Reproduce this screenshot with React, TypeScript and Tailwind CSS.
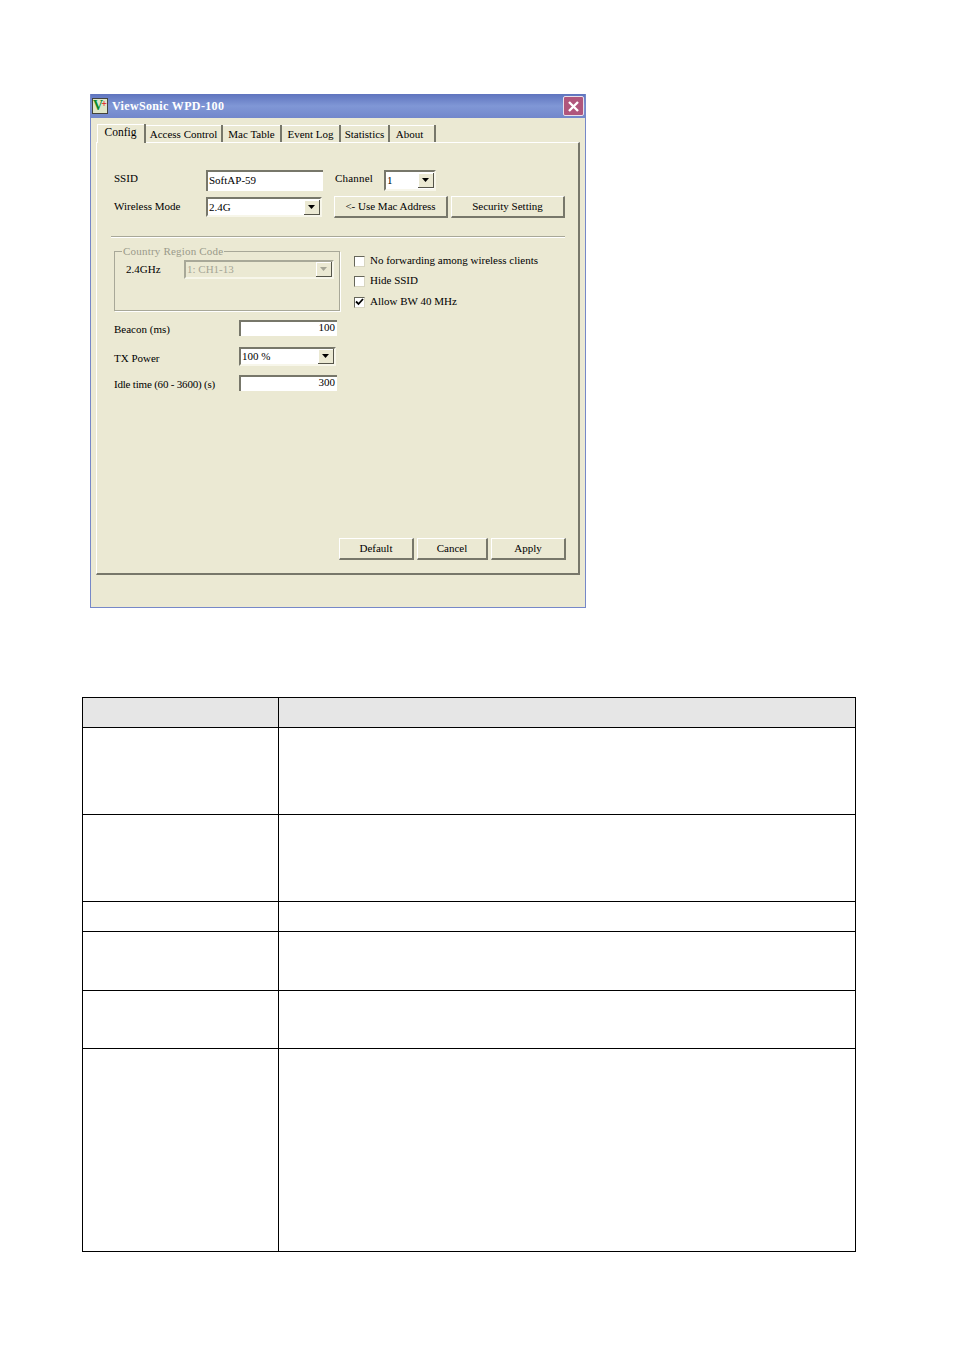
const serif = { fontFamily: '"Liberation Serif", "Noto Sans CJK TC", serif' };

function Arrow({ disabled }: { disabled?: boolean }) {
  return (
    <svg width="7" height="4" viewBox="0 0 7 4">
      <path d="M0 0H7L3.5 4Z" fill={disabled ? '#a5a596' : '#000000'} />
    </svg>
  );
}

function Combo({ value, className, disabled }: { value: string; className: string; disabled?: boolean }) {
  return (
    <div
      className={`flex items-center border-2 ${
        disabled
          ? 'border-t-[#a8a898] border-l-[#a8a898] border-r-[#f7f6ea] border-b-[#f7f6ea] bg-[#ebe9d3] text-[#a5a596]'
          : 'border-t-[#77776a] border-l-[#77776a] border-r-[#f7f6ea] border-b-[#f7f6ea] bg-white'
      } ${className}`}
    >
      <span className="flex-1 pl-px leading-none">{value}</span>
      <span className="flex h-[15px] w-[16px] items-center justify-center border-r border-b border-r-[#55554a] border-b-[#55554a] bg-[#ebe9d3] shadow-[inset_1px_1px_0_#ffffff]">
        <Arrow disabled={disabled} />
      </span>
    </div>
  );
}

function Input({ value, className, right }: { value: string; className: string; right?: boolean }) {
  return (
    <div
      className={`flex items-center border-t-2 border-l-2 border-t-[#77776a] border-l-[#77776a] bg-white px-px pb-[3px] leading-none ${
        right ? 'justify-end pr-[2px]' : ''
      } ${className}`}
    >
      {value}
    </div>
  );
}

function Button({ label, className }: { label: string; className: string }) {
  return (
    <div
      className={`flex h-[22px] items-center justify-center border-t border-l border-r-2 border-b-2 border-t-white border-l-white border-r-[#77776a] border-b-[#77776a] ${className}`}
    >
      {label}
    </div>
  );
}

function Check({ label, checked, className }: { label: string; checked?: boolean; className?: string }) {
  return (
    <div className={`flex h-[20px] items-center ${className ?? ''}`}>
      <span className="flex h-[11px] w-[11px] items-center justify-center border border-t-[#66665a] border-l-[#66665a] border-r-[#d8d6c2] border-b-[#d8d6c2] bg-white">
        {checked && (
          <svg width="9" height="8" viewBox="0 0 9 8">
            <path d="M1 3.5L3.5 6L8 1" fill="none" stroke="#000000" strokeWidth="1.8" />
          </svg>
        )}
      </span>
      <span className="ml-[5px] pb-px">{label}</span>
    </div>
  );
}

const tabs = [
  { label: 'Access Control', w: 'w-[77px]', pad: 'pt-px' },
  { label: 'Mac Table', w: 'w-[59px]', pad: 'pt-px' },
  { label: 'Event Log', w: 'w-[59px]', pad: 'pt-px' },
  { label: 'Statistics', w: 'w-[49px]', pad: 'pt-px' },
  { label: 'About', w: 'w-[46px]', pad: 'pt-px pr-[5px]' },
];

function Dialog() {
  return (
    <div
      className="flex h-[514px] w-[496px] flex-col border-x border-b border-[#7688c8] bg-[#ebe9d3] text-[11px] text-black"
      style={serif}
    >
      {/* title bar */}
      <div className="flex h-[24px] items-center bg-gradient-to-b from-[#5f74be] via-[#8097d6] to-[#7287cb] px-px">
        <span className="flex h-[16px] w-[16px] items-center justify-center border border-[#44443c] bg-[#dfe6c8] text-[14px] font-bold leading-none">
          <span className="text-[#0a8a2a]">V</span>
          <span className="-ml-[2px] -mt-[4px] text-[10px] text-[#e02020]">+</span>
        </span>
        <span className="ml-[4px] flex-1 text-[12px] font-bold tracking-[0.35px] text-white">ViewSonic WPD-100</span>
        <span className="flex h-[20px] w-[21px] items-center justify-center rounded-[2px] border border-[#e8e0ea] bg-[#b0567c]">
          <svg width="11" height="11" viewBox="0 0 11 11">
            <path d="M1 1L10 10M10 1L1 10" stroke="#ffffff" strokeWidth="2.4" />
          </svg>
        </span>
      </div>

      {/* tabs */}
      <div className="ml-[6px] mt-[5px] flex h-[19px] items-end">
        <div className="z-10 -mb-px flex h-[19px] w-[49px] items-start justify-center border-r-2 border-r-[#77776a] bg-[#ebe9d3] text-[11.5px] shadow-[inset_1px_1px_0_#ffffff]">
          Config
        </div>
        {tabs.map((t) => (
          <div
            key={t.label}
            className={`flex h-[17px] items-center justify-center whitespace-nowrap border-r-2 border-r-[#77776a] shadow-[inset_0_1px_0_#ffffff] ${t.w} ${t.pad}`}
          >
            {t.label}
          </div>
        ))}
      </div>

      {/* panel */}
      <div className="ml-[5px] flex h-[433px] w-[484px] flex-col border-t border-l border-r-2 border-b-2 border-t-white border-l-white border-r-[#77776a] border-b-[#77776a] pl-[17px] pt-[27px]">
        <div className="flex h-[21px] items-center">
          <span className="w-[92px] pb-[4px]">SSID</span>
          <Input value="SoftAP-59" className="h-[21px] w-[117px]" />
          <span className="ml-[12px] w-[49px] pb-[4px] tracking-[0.2px]">Channel</span>
          <Combo value="1" className="h-[21px] w-[52px]" />
        </div>
        <div className="mt-[5px] flex h-[22px] items-center">
          <span className="w-[92px] pb-px">Wireless Mode</span>
          <Combo value="2.4G" className="h-[20px] w-[116px]" />
          <Button label="<- Use Mac Address" className="ml-[12px] w-[114px]" />
          <Button label="Security Setting" className="ml-[3px] w-[114px]" />
        </div>
        <div className="-ml-[3px] mt-[18px] h-[2px] w-[454px] border-t border-b border-t-[#a8a898] border-b-white" />

        <div className="mt-[13px] flex">
          <div className="relative h-[60px] w-[226px] border border-[#a8a898] pl-[11px] pt-[8px] shadow-[1px_1px_0_#ffffff]">
            <span className="absolute -top-[9px] left-[7px] bg-[#ebe9d3] px-px tracking-[0.2px] text-[#9a9a8a]">
              Country Region Code
            </span>
            <div className="flex items-center">
              <span className="w-[58px]">2.4GHz</span>
              <Combo value="1: CH1-13" className="h-[19px] w-[150px]" disabled />
            </div>
          </div>
          <div className="ml-[14px] flex flex-col">
            <Check label="No forwarding among wireless clients" />
            <Check label="Hide SSID" />
            <Check label="Allow BW 40 MHz" checked className="mt-px" />
          </div>
        </div>

        <div className="mt-[8px] flex h-[16px] items-center">
          <span className="w-[125px] pt-[3px]">Beacon (ms)</span>
          <Input value="100" right className="h-[16px] w-[98px]" />
        </div>
        <div className="mt-[11px] flex h-[19px] items-center">
          <span className="w-[125px] pt-[3px]">TX Power</span>
          <Combo value="100 %" className="h-[19px] w-[97px]" />
        </div>
        <div className="mt-[9px] flex h-[16px] items-center">
          <span className="w-[125px] pt-[3px] tracking-[-0.2px]">Idle time (60 - 3600) (s)</span>
          <Input value="300" right className="h-[16px] w-[98px]" />
        </div>

        <div className="mb-[13px] mt-auto flex justify-end pr-[12px]">
          <Button label="Default" className="w-[75px]" />
          <Button label="Cancel" className="ml-[3px] w-[71px]" />
          <Button label="Apply" className="ml-[3px] w-[75px]" />
        </div>
      </div>
    </div>
  );
}

const rows = ['h-[87px]', 'h-[87px]', 'h-[30px]', 'h-[59px]', 'h-[58px]', 'h-[203px]'];

function SpecTable() {
  return (
    <div className="ml-[82px] mt-[89px] w-[774px] border-t border-l border-black">
      <div className="grid h-[30px] grid-cols-[196px_1fr] bg-[#e6e6e6]">
        <div className="border-r border-b border-black" />
        <div className="border-r border-b border-black" />
      </div>
      {rows.map((h, i) => (
        <div key={i} className={`grid grid-cols-[196px_1fr] ${h}`}>
          <div className="border-r border-b border-black" />
          <div className="border-r border-b border-black" />
        </div>
      ))}
    </div>
  );
}

export default function App() {
  return (
    <div className="min-h-[1350px] bg-white pt-[94px]">
      <div className="ml-[90px]">
        <Dialog />
      </div>
      <SpecTable />
    </div>
  );
}
